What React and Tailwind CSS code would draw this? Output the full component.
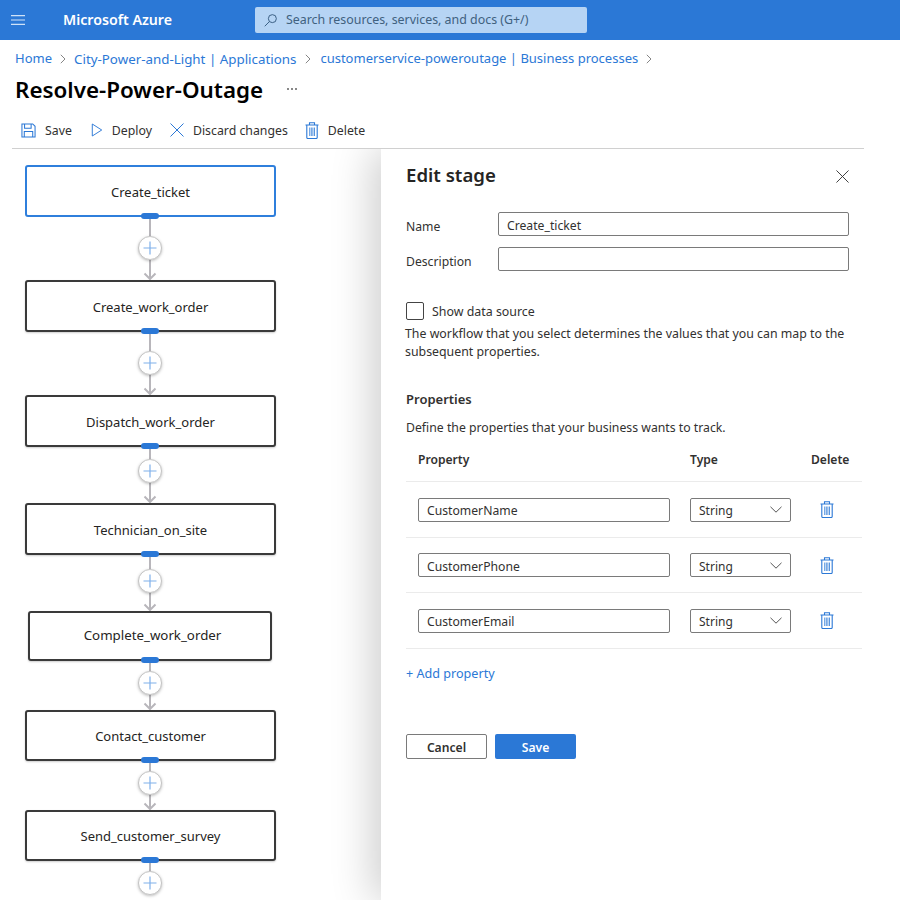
const FONT = "font-['Noto_Sans','Open_Sans',sans-serif]";

function Trash({ className = "" }) {
  return (
    <svg viewBox="0 0 14 17" className={className} fill="none" stroke="currentColor" strokeWidth="1.1">
      <path d="M.5 3h13M4.500 3V.8h5V3M1.800 3v12.500a1 1 0 0 0 1 1h8.400a1 1 0 0 0 1-1V3" />
      <path d="M4.700 5.500v8.500M6.300 5.500v8.500M7.900 5.500v8.500M9.500 5.500v8.500" strokeWidth="0.8" />
    </svg>
  );
}

function Chevron({ className = "" }) {
  return (
    <svg viewBox="0 0 12 7" className={className} fill="none" stroke="currentColor" strokeWidth="1">
      <path d="M.5.8 6 6.200 11.500.8" />
    </svg>
  );
}

function Connector({ gap, center, last }) {
  const top = center - 12;
  const bottom = gap - center - 12;
  return (
    <div className="flex flex-col items-center" style={{ height: gap }}>
      <div className="w-[2px] bg-[#b8b6bb]" style={{ height: top }} />
      <div className="w-[24px] h-[24px] shrink-0 rounded-full bg-white border border-[#c4c4c4] shadow-[0_1px_3px_rgba(0,0,0,0.25)] flex items-center justify-center z-10">
        <svg viewBox="0 0 14 14" className="w-[14px] h-[14px]" stroke="#7fb0ea" strokeWidth="1.200">
          <path d="M7 .5v13M.5 7h13" />
        </svg>
      </div>
      {!last && (
        <svg width="14" height={bottom} viewBox={`0 0 14 ${bottom}`} fill="none" stroke="#b8b6bb" strokeWidth="2" className="shrink-0">
          <path d={`M7 0V${bottom - 1}M1.500 ${bottom - 6.500} 7 ${bottom - 1} 12.500 ${bottom - 6.500}`} />
        </svg>
      )}
    </div>
  );
}

const stages = [
  { name: "Create_ticket", h: 52, gap: 63, center: 31, active: true, pad: "pt-[4px]" },
  { name: "Create_work_order", h: 52, gap: 63, center: 31, pad: "pt-[4px]" },
  { name: "Dispatch_work_order", h: 52, gap: 56, center: 24, pad: "pt-[4px]" },
  { name: "Technician_on_site", h: 52, gap: 56, center: 26, pad: "pt-[4px]" },
  { name: "Complete_work_order", h: 50, gap: 49, center: 22, small: true, pad: "pt-0" },
  { name: "Contact_customer", h: 51, gap: 49, center: 22, pad: "pt-[2px]" },
  { name: "Send_customer_survey", h: 51, gap: 40, center: 22, last: true, pad: "pt-[2px]" },
];

function Stage({ s }) {
  return (
    <>
      <div
        className={
          "relative flex items-center justify-center rounded-[3px] bg-white border-2 text-[#252423] " +
          s.pad + " " +
          (s.active ? "border-[#2f7fdc] " : "border-[#3a3a3a] shadow-[0_1px_2px_rgba(0,0,0,0.2)] ") +
          (s.small ? "w-[244px] pl-[5px] text-[13.300px]" : "w-[251px] self-start text-[13px]")
        }
        style={{ height: s.h }}
      >
        {s.name}
        <span className={"absolute -bottom-[4px] w-[18px] h-[6px] rounded-full bg-[#2b78d6] " + (s.small ? "left-[111px]" : "left-[114px]")} />
      </div>
      <Connector gap={s.gap} center={s.center} last={s.last} />
    </>
  );
}

function Toolbar() {
  return (
    <div className="flex items-center h-[37px] shrink-0 ml-[12px] mr-[36px] text-[12.300px] text-[#323130] border-b border-[#d0d0d0] pl-[9px]">
      <div className="flex items-center gap-[9px]">
        <svg viewBox="0 0 16 16" className="w-[15px] h-[15px] text-[#2b78d6]" fill="none" stroke="currentColor" strokeWidth="1.100">
          <path d="M1 1h11.500L15 3.500V15H1z" />
          <path d="M3.800 1v4.500h7V1M3.500 15V9h9v6" />
        </svg>
        <span className="pt-[2px]">Save</span>
      </div>
      <div className="flex items-center gap-[9px] ml-[19px]">
        <svg viewBox="0 0 14 16" className="w-[12px] h-[14px] text-[#2b78d6]" fill="none" stroke="currentColor" strokeWidth="1.100">
          <path d="M1.500 1 12.500 8 1.500 15z" />
        </svg>
        <span className="pt-[2px]">Deploy</span>
      </div>
      <div className="flex items-center gap-[9px] ml-[18px]">
        <svg viewBox="0 0 14 14" className="w-[14px] h-[14px] text-[#2b78d6]" fill="none" stroke="currentColor" strokeWidth="1">
          <path d="M.5.5l13 13M13.500.5l-13 13" />
        </svg>
        <span className="pt-[2px]">Discard changes</span>
      </div>
      <div className="flex items-center gap-[9px] ml-[17px]">
        <Trash className="w-[14px] h-[17px] text-[#2b78d6]" />
        <span className="pt-[2px]">Delete</span>
      </div>
    </div>
  );
}

function PropertyRow({ name }) {
  return (
    <div className="flex items-center h-[55.500px] border-b border-[#ebebeb] pl-[12px] pt-[1px]">
      <div className="w-[252px] h-[24px] border border-[#7a7a7a] rounded-[2px] px-[8px] pt-[3px] flex items-center text-[12.200px] text-[#323130]">{name}</div>
      <div className="ml-[20px] w-[101px] h-[24px] border border-[#7a7a7a] rounded-[2px] pl-[8px] pr-[8px] flex items-center justify-between text-[12px] text-[#323130]">
        <span className="pt-[3px]">String</span>
        <Chevron className="w-[12px] h-[7px] text-[#555]" />
      </div>
      <Trash className="ml-[29px] w-[14px] h-[17px] text-[#2b78d6]" />
    </div>
  );
}

export default function App() {
  return (
    <div className={FONT + " w-[900px] h-[900px] overflow-hidden bg-white flex flex-col"}>
      <header className="h-[40px] shrink-0 bg-[#2b78d6] flex items-center text-white">
        <svg viewBox="0 0 14 10" className="ml-[11px] w-[14px] h-[10px]" stroke="#cfe2f8" strokeWidth="1.200">
          <path d="M0 .6h14M0 5h14M0 9.400h14" />
        </svg>
        <span className="ml-[38px] w-[192px] text-[14.200px] font-semibold">Microsoft Azure</span>
        <div className="w-[332px] h-[26px] rounded-[2px] bg-[#b6d4f4] flex items-center pl-[9px] gap-[9px] text-[12.400px] text-[#40617f]">
          <svg viewBox="0 0 14 14" className="w-[13px] h-[13px]" fill="none" stroke="#33587c" strokeWidth="1">
            <circle cx="9" cy="5" r="4.300" />
            <path d="M5.800 8.200.8 13.200" />
          </svg>
          <span>Search resources, services, and docs (G+/)</span>
        </div>
      </header>

      <nav className="h-[38px] shrink-0 flex items-center pl-[15px] text-[13px] text-[#2b78d6]">
        <span>Home</span>
        <svg viewBox="0 0 6 10" className="w-[6px] h-[10px] mx-[8px]" fill="none" stroke="#777" strokeWidth="0.9"><path d="M.8.8 5 5 .8 9.200" /></svg>
        <span className="text-[13.350px]">City-Power-and-Light | Applications</span>
        <svg viewBox="0 0 6 10" className="w-[6px] h-[10px] mx-[9px]" fill="none" stroke="#777" strokeWidth="0.9"><path d="M.8.8 5 5 .8 9.200" /></svg>
        <span>customerservice-poweroutage | Business processes</span>
        <svg viewBox="0 0 6 10" className="w-[6px] h-[10px] ml-[8px]" fill="none" stroke="#777" strokeWidth="0.9"><path d="M.8.8 5 5 .8 9.200" /></svg>
      </nav>

      <div className="h-[24px] shrink-0 flex items-center pl-[15px]">
        <h1 className="text-[22.400px] font-semibold text-black">Resolve-Power-Outage</h1>
        <span className="ml-[24px] -mt-[2px] flex gap-[2px]">
          <i className="w-[2px] h-[2px] bg-[#888]" />
          <i className="w-[2px] h-[2px] bg-[#888]" />
          <i className="w-[2px] h-[2px] bg-[#888]" />
        </span>
      </div>

      <div className="h-[10px] shrink-0" />
      <Toolbar />

      <div className="flex-1 flex overflow-hidden">
        <div className="w-[381px] shrink-0 pt-[16px] pl-[25px]">
          <div className="w-[250px] flex flex-col items-center">
            {stages.map((s) => (
              <Stage key={s.name} s={s} />
            ))}
          </div>
        </div>

        <aside className="relative flex-1 bg-white shadow-[-8px_0_40px_rgba(0,0,0,0.2)] pl-[25px] pr-[38px]">
          <div className="flex items-center justify-between h-[52px] w-[443px]">
            <h2 className="text-[18.600px] font-semibold text-[#252423]">Edit stage</h2>
            <svg viewBox="0 0 14 14" className="w-[13px] h-[13px] mt-[2px]" fill="none" stroke="#333" strokeWidth="1">
              <path d="M.5.5l13 13M13.500.5l-13 13" />
            </svg>
          </div>

          <div className="mt-[11px] h-[24px] flex items-center text-[12.200px] text-[#323130]">
            <label className="w-[92px] mt-[7px]">Name</label>
            <div className="w-[351px] h-[24px] border border-[#7a7a7a] rounded-[2px] px-[8px] pt-[4px] flex items-center">Create_ticket</div>
          </div>
          <div className="mt-[11px] h-[24px] flex items-center text-[12.200px] text-[#323130]">
            <label className="w-[92px] mt-[7px]">Description</label>
            <div className="w-[351px] h-[24px] border border-[#7a7a7a] rounded-[2px]" />
          </div>

          <div className="mt-[31px] h-[18px] flex items-center gap-[8px] text-[12.400px] text-[#323130]">
            <span className="w-[18px] h-[18px] rounded-[2px] border border-[#444]" />
            <span className="pt-[2px]">Show data source</span>
          </div>
          <p className="mt-[5px] -ml-[1px] text-[12.350px] leading-[18px] text-[#323130] w-[445px]">
            The workflow that you select determines the values that you can map to the subsequent properties.
          </p>

          <h3 className="mt-[29px] text-[13px] leading-[18px] font-semibold text-[#323130]">Properties</h3>
          <p className="mt-[11px] text-[12.250px] leading-[18px] text-[#323130]">Define the properties that your business wants to track.</p>

          <div className="mt-[12px] w-[456px]">
            <div className="flex items-center h-[22px] pl-[12px] text-[12.100px] font-semibold text-[#323130]">
              <span className="w-[272px]">Property</span>
              <span className="w-[121px]">Type</span>
              <span>Delete</span>
            </div>
            <div className="h-[11px] border-b border-[#ebebeb]" />
            <PropertyRow name="CustomerName" />
            <PropertyRow name="CustomerPhone" />
            <PropertyRow name="CustomerEmail" />
          </div>

          <div className="mt-[16px] text-[12.600px] leading-[18px] text-[#2b78d6]">+ Add property</div>

          <div className="mt-[51px] flex gap-[8px] text-[12.150px] font-semibold">
            <button className="w-[81px] h-[25px] border border-[#7a7a7a] rounded-[2px] text-[#323130] pt-[4px]">Cancel</button>
            <button className="w-[81px] h-[25px] rounded-[2px] bg-[#2b78d6] text-white pt-[4px]">Save</button>
          </div>
        </aside>
      </div>
    </div>
  );
}
